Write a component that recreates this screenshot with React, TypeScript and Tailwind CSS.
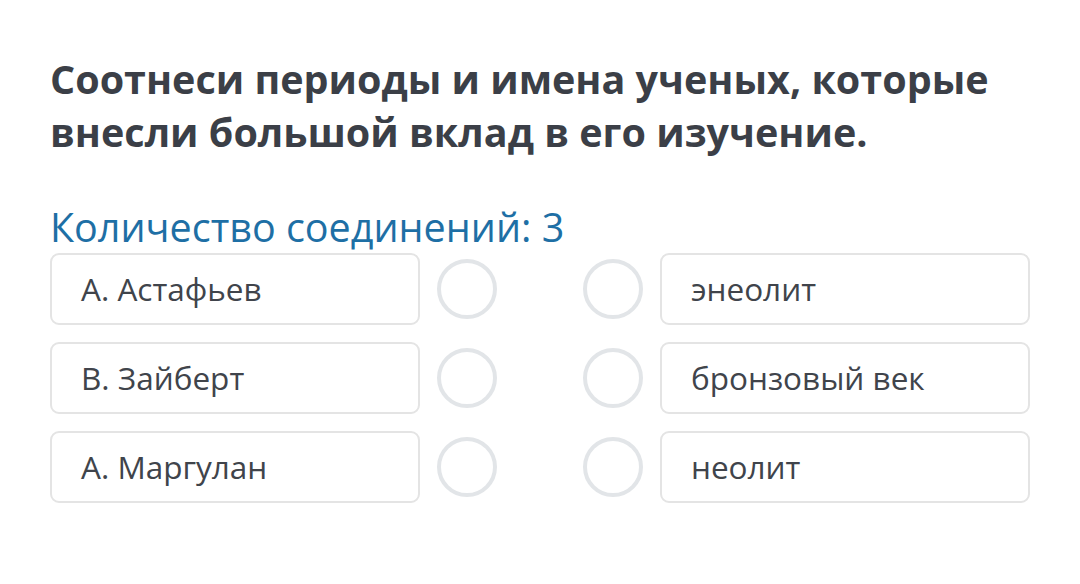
const leftItems = ["А. Астафьев", "В. Зайберт", "А. Маргулан"];
const rightItems = ["энеолит", "бронзовый век", "неолит"];

const Dot = () => (
  <div className="h-[60px] w-[60px] shrink-0 rounded-full border-[4px] border-[#e2e5e8] bg-white" />
);

const Box = ({ label }: { label: string }) => (
  <div className="flex h-[72px] w-[370px] shrink-0 items-center rounded-[9px] border-2 border-[#e4e4e4] bg-white pl-[29px] text-[31.5px] text-[#40444b]">
    {label}
  </div>
);

export default function App() {
  return (
    <div
      className="min-h-[584px] w-[1080px] bg-white px-[50px] pt-[53px]"
      style={{ fontFamily: '"Open Sans", "Noto Sans", sans-serif' }}
    >
      <h1 className="text-[39.5px] font-bold leading-[53px] text-[#3b3f47]">
        Соотнеси периоды и имена ученых, которые
        <br />
        внесли большой вклад в его изучение.
      </h1>
      <div className="mt-[43px] text-[39.5px] leading-[50px] text-[#1e6fa5]">
        Количество соединений: 3
      </div>
      <div className="mt-[1px] flex flex-col gap-[17px]">
        {leftItems.map((l, i) => (
          <div key={l} className="flex items-center">
            <Box label={l} />
            <div className="ml-[17px]">
              <Dot />
            </div>
            <div className="ml-[86px]">
              <Dot />
            </div>
            <div className="ml-[17px]">
              <Box label={rightItems[i]} />
            </div>
          </div>
        ))}
      </div>
    </div>
  );
}
